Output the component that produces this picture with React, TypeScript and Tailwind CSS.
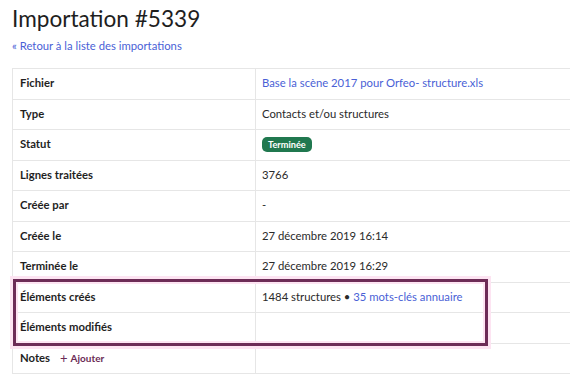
import React from "react";

const rows: { label: React.ReactNode; value: React.ReactNode }[] = [
  {
    label: "Fichier",
    value: <span className="text-[#4a5fd6]">Base la scène 2017 pour Orfeo- structure.xls</span>,
  },
  { label: "Type", value: "Contacts et/ou structures" },
  {
    label: "Statut",
    value: (
      <span className="inline-flex h-[15px] items-center rounded-[5px] bg-[#20784f] px-[6px] text-[9.2px] font-bold leading-none text-white">
        Terminée
      </span>
    ),
  },
  { label: "Lignes traitées", value: "3766" },
  { label: "Créée par", value: "-" },
  { label: "Créée le", value: "27 décembre 2019 16:14" },
  { label: "Terminée le", value: "27 décembre 2019 16:29" },
  {
    label: "Éléments créés",
    value: (
      <span>
        1484 structures • <span className="text-[#4a5fd6]">35 mots-clés annuaire</span>
      </span>
    ),
  },
  { label: "Éléments modifiés", value: "" },
  {
    label: (
      <span className="flex items-center">
        Notes
        <span className="ml-[10px] flex items-center text-[10px] font-bold text-[#6b2a55]">
          <span className="mr-[3px] text-[13px] font-normal leading-none">+</span>Ajouter
        </span>
      </span>
    ),
    value: "",
  },
];

export default function App() {
  return (
    <div
      className="relative h-[382px] w-[570px] overflow-hidden bg-white text-[#222]"
      style={{ fontFamily: "Lato, 'Noto Sans', sans-serif" }}
    >
      <div className="pl-[12px] pt-[5px]">
        <h1 className="text-[22.6px] leading-[28px] text-[#1e1e1e]">Importation #5339</h1>
        <div className="mt-[6px] text-[11.3px] leading-[14px] text-[#4a5fd6]">« Retour à la liste des importations</div>
      </div>
      <div className="relative ml-[12px] mt-[15px] w-[620px] border-t border-[#e6e6e6]">
        {rows.map((r, i) => (
          <div key={i} className="grid h-[30.5px] grid-cols-[243px_1fr] border-b border-[#e6e6e6] text-[11.3px]">
            <div className="flex items-center border-l border-[#e6e6e6] pl-[7px] font-bold text-[#1f1f1f]">{r.label}</div>
            <div className="flex items-center border-l border-[#e6e6e6] pl-[6px] text-[#2a2a2a]">{r.value}</div>
          </div>
        ))}
        <div className="pointer-events-none absolute left-[1px] top-[210px] h-[67px] w-[475px] border-[3px] border-[#6d2c57] shadow-[0_0_0_3px_#fde4f2,inset_0_0_0_2px_#fde4f2]" />
      </div>
    </div>
  );
}
